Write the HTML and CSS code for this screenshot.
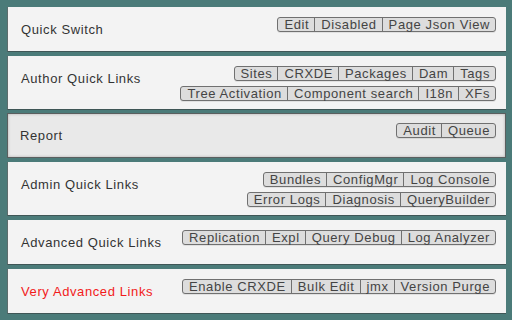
FILE: index.html
```html
<!DOCTYPE html>
<html>
<head>
<meta charset="utf-8">
<link rel="stylesheet" href="styles.css">
</head>
<body>
<div class="panel">
  <section class="card">
    <div class="label">Quick Switch</div>
    <div class="groups">
      <div class="group"><span class="btn">Edit</span><span class="btn">Disabled</span><span class="btn">Page Json View</span></div>
    </div>
  </section>
  <section class="card">
    <div class="label">Author Quick Links</div>
    <div class="groups">
      <div class="group"><span class="btn">Sites</span><span class="btn">CRXDE</span><span class="btn">Packages</span><span class="btn">Dam</span><span class="btn">Tags</span></div>
      <div class="group"><span class="btn">Tree Activation</span><span class="btn">Component search</span><span class="btn">I18n</span><span class="btn">XFs</span></div>
    </div>
  </section>
  <section class="card card-active">
    <div class="label">Report</div>
    <div class="groups">
      <div class="group"><span class="btn">Audit</span><span class="btn">Queue</span></div>
    </div>
  </section>
  <section class="card">
    <div class="label">Admin Quick Links</div>
    <div class="groups">
      <div class="group"><span class="btn">Bundles</span><span class="btn">ConfigMgr</span><span class="btn">Log Console</span></div>
      <div class="group"><span class="btn">Error Logs</span><span class="btn">Diagnosis</span><span class="btn">QueryBuilder</span></div>
    </div>
  </section>
  <section class="card">
    <div class="label">Advanced Quick Links</div>
    <div class="groups">
      <div class="group"><span class="btn">Replication</span><span class="btn">Expl</span><span class="btn">Query Debug</span><span class="btn">Log Analyzer</span></div>
    </div>
  </section>
  <section class="card">
    <div class="label label-danger">Very Advanced Links</div>
    <div class="groups">
      <div class="group"><span class="btn">Enable CRXDE</span><span class="btn">Bulk Edit</span><span class="btn">jmx</span><span class="btn">Version Purge</span></div>
    </div>
  </section>
</div>
</body>
</html>
```
FILE: styles.css
```css
html, body {
  margin: 0;
  padding: 0;
  background: #4b7b79;
}
body {
  width: 512px;
  height: 320px;
  overflow: hidden;
  font-family: "Liberation Sans", Arial, sans-serif;
}
.panel {
  display: flex;
  flex-direction: column;
  gap: 4px;
  padding: 7px 6px 6px 7px;
}
.card {
  display: flex;
  justify-content: space-between;
  align-items: flex-start;
  min-height: 45px;
  box-sizing: border-box;
  padding: 10px 10px 8px 13px;
  background: #f3f3f3;
  border-bottom: 1px solid #3f5656;
  border-left: 1px solid #5d6d6d;
}
.card-active {
  background: #e9e9e9;
  border: 1px solid #5a5f5f;
  box-shadow: inset 0 0 3px rgba(0,0,0,0.25);
  padding: 9px 9px 8px 12px;
  margin-top: -1px;
}
.label {
  margin-top: 5px;
  font-size: 13px;
  line-height: 15px;
  letter-spacing: 0.6px;
  color: #333;
}
.label-danger {
  color: #f21b1b;
}
.groups {
  display: flex;
  flex-direction: column;
  align-items: flex-end;
  gap: 5px;
}
.group {
  display: flex;
  border: 1px solid #707070;
  border-radius: 3px;
  background: #dddddd;
  box-shadow: 0 1px 0 rgba(0,0,0,0.08);
}
.btn {
  font-size: 13px;
  line-height: 13px;
  letter-spacing: 0.6px;
  padding: 0 5px 0 6px;
  color: #444;
  border-left: 1px solid #707070;
}
.btn:first-child {
  border-left: none;
}
```
